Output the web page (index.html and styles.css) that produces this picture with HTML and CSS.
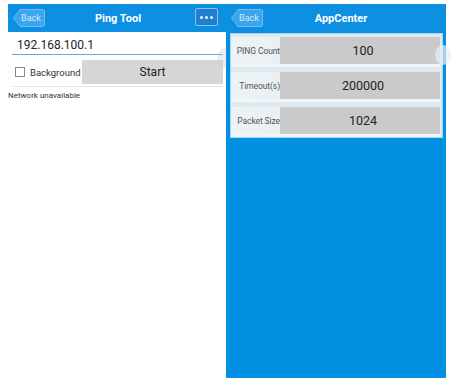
FILE: index.html
```html
<!DOCTYPE html>
<html>
<head>
<meta charset="utf-8">
<link rel="stylesheet" href="styles.css">
</head>
<body>
<div class="screens">
  <section class="panel left">
    <header class="bar">
      <div class="back"><span>Back</span></div>
      <div class="title">Ping Tool</div>
      <div class="menu"><i></i><i></i><i></i></div>
    </header>
    <div class="ping-body">
      <div class="input-row"><span class="ip">192.168.100.1</span></div>
      <div class="action-row">
        <label class="check"><span class="box"></span>Background</label>
        <div class="start">Start</div>
      </div>
      <div class="status">Network unavailable</div>
      <div class="knob knob-left"></div>
    </div>
  </section>
  <section class="panel right">
    <header class="bar">
      <div class="back"><span>Back</span></div>
      <div class="title title-r">AppCenter</div>
    </header>
    <div class="card">
      <div class="row"><div class="lbl">PING Count</div><div class="val">100</div></div>
      <div class="row"><div class="lbl">Timeout(s)</div><div class="val">200000</div></div>
      <div class="row"><div class="lbl">Packet Size</div><div class="val">1024</div></div>
      <div class="knob knob-right"></div>
    </div>
  </section>
</div>
</body>
</html>
```
FILE: styles.css
```css
* { box-sizing: border-box; }
body {
  margin: 0;
  background: #fff;
  font-family: Roboto, "Liberation Sans", sans-serif;
}
.screens {
  display: flex;
  margin: 4px 0 0 8px;
  height: 374px;
}
.panel { position: relative; }
.left { width: 218px; background: #fff; }
.right { width: 220px; background: #0290e2; }
.bar {
  height: 28px;
  background: #0d8fe2;
  display: flex;
  align-items: center;
  position: relative;
}
.back {
  position: absolute;
  left: 5px;
  top: 5px;
  width: 32px;
  height: 18px;
  background: #73bdf2;
  clip-path: polygon(0 50%, 7px 0, 100% 0, 100% 100%, 7px 100%);
  border-radius: 0 3px 3px 0;
  padding: 1px;
}
.back span {
  display: flex;
  align-items: center;
  justify-content: center;
  height: 100%;
  width: 100%;
  background: #3ba5ee;
  clip-path: polygon(0 50%, 6px 0, 100% 0, 100% 100%, 6px 100%);
  border-radius: 0 2px 2px 0;
  color: #d4ebfc;
  font-size: 9px;
  padding-left: 4px;
}
.title {
  flex: 1;
  text-align: center;
  color: #fff;
  font-weight: bold;
  font-size: 11px;
  padding-left: 2px;
}
.title-r { padding-left: 10px; }
.menu {
  position: absolute;
  right: 8px;
  top: 4px;
  width: 23px;
  height: 18px;
  border: 1px solid #8ac3ee;
  background: #1f80d2;
  border-radius: 2px;
  display: flex;
  align-items: center;
  justify-content: center;
  gap: 2px;
}
.menu i {
  width: 3px;
  height: 3px;
  border-radius: 50%;
  background: #e8f3fc;
}
.ping-body { position: relative; padding: 0 3px 0 4px; }
.input-row {
  height: 23px;
  display: flex;
  align-items: flex-end;
  padding: 0 0 2px 5px;
  border-bottom: 1px solid #6aa7d6;
}
.ip {
  font-size: 12px;
  color: #222;
}
.action-row {
  display: flex;
  align-items: center;
  height: 29px;
  margin-top: 3px;
  border-bottom: 1px solid #e6e6e6;
}
.check {
  display: flex;
  align-items: center;
  font-size: 9.5px;
  color: #333;
  width: 70px;
  padding-left: 3px;
  gap: 5px;
}
.box {
  width: 10px;
  height: 10px;
  border: 1px solid #8a8a8a;
  background: #fff;
}
.start {
  flex: 1;
  height: 24px;
  background: #d6d6d6;
  display: flex;
  align-items: center;
  justify-content: center;
  font-size: 12px;
  color: #222;
}
.status {
  font-size: 8px;
  color: #333;
  margin: 4px 0 0 -4px;
}
.knob {
  position: absolute;
  width: 16px;
  height: 20px;
  border-radius: 50%;
}
.knob-left {
  right: -7px;
  top: 16px;
  background: rgba(200, 200, 200, 0.35);
}
.card {
  position: relative;
  margin: 1px 3px 0 4px;
  background: #dfe9ef;
  border: 1px solid #a7d3f1;
  padding: 3px 2px 3px 0;
  display: flex;
  flex-direction: column;
  gap: 8px;
}
.row {
  display: flex;
  align-items: stretch;
  height: 27px;
  background: linear-gradient(to right, #edf2f5, #e2e9ee);
  box-shadow: 0 3px 0 #eef6fb;
}
.lbl {
  width: 49px;
  font-size: 8.5px;
  color: #555;
  display: flex;
  align-items: center;
  justify-content: flex-end;
  white-space: nowrap;
  letter-spacing: -0.1px;
}
.val {
  flex: 1;
  background: #cacaca;
  display: flex;
  align-items: center;
  justify-content: center;
  font-size: 12.5px;
  color: #222;
  padding-left: 6px;
}
.knob-right {
  right: -9px;
  top: 11px;
  background: rgba(230, 240, 248, 0.7);
}
```
